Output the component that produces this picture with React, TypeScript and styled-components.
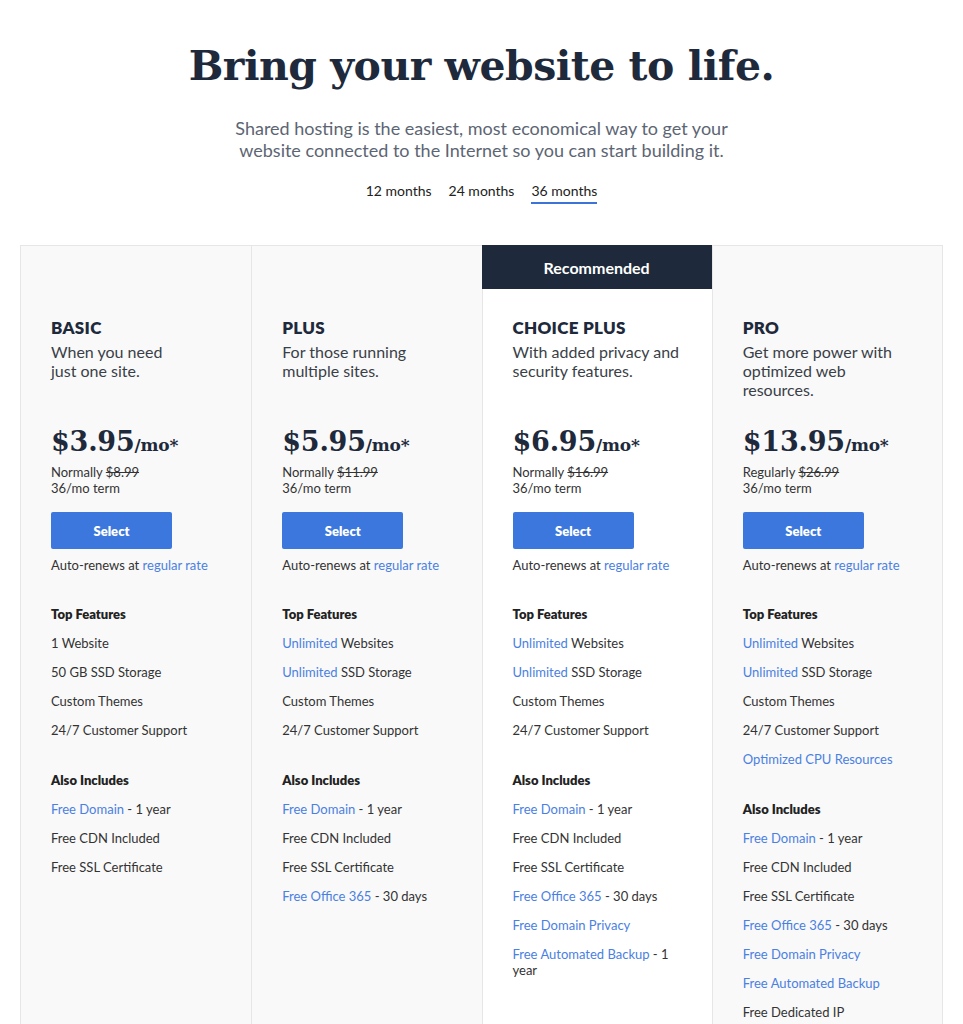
import React from "react";
import styled, { createGlobalStyle } from "styled-components";

const Global = createGlobalStyle`
  html, body { margin: 0; padding: 0; background: #ffffff; }
  body { font-family: Lato, "Open Sans", sans-serif; color: #333; }
  * { box-sizing: border-box; }
`;

const Page = styled.div`
  width: 963px;
  padding-top: 37px;
  display: flex;
  flex-direction: column;
  align-items: center;
`;

const Title = styled.h1`
  margin: 0;
  font-family: "DejaVu Serif", "Liberation Serif", serif;
  font-weight: 700;
  font-size: 41px;
  line-height: 58px;
  color: #1e2a3b;
  letter-spacing: -0.5px;
`;

const Subtitle = styled.p`
  margin: 22px 0 0;
  font-size: 18px;
  line-height: 22px;
  color: #5c6573;
  text-align: center;
`;

const Tabs = styled.div`
  margin-top: 21px;
  display: flex;
  gap: 17px;
`;

const Tab = styled.div<{ $active?: boolean }>`
  font-size: 14px;
  line-height: 18px;
  color: #222;
  padding-bottom: 2px;
  border-bottom: 2px solid ${(p) => (p.$active ? "#3b74d6" : "transparent")};
`;

const Grid = styled.div`
  margin-top: 41px;
  width: 923px;
  display: grid;
  grid-template-columns: repeat(4, 1fr);
  border: 1px solid #e6e6e6;
  border-bottom: none;
`;

const Card = styled.div<{ $featured?: boolean }>`
  background: ${(p) => (p.$featured ? "#ffffff" : "#f9f9f9")};
  border-left: 1px solid #e6e6e6;
  &:first-child { border-left: none; }
  display: flex;
  flex-direction: column;
  padding-bottom: 60px;
`;

const Banner = styled.div<{ $show?: boolean }>`
  height: 44px;
  margin: -1px 0 0 -1px;
  background: ${(p) => (p.$show ? "#1e2a3b" : "transparent")};
  color: #fff;
  font-size: 16px;
  font-weight: 700;
  display: flex;
  align-items: center;
  justify-content: center;
`;

const Body = styled.div`
  padding: 29px 31px 0 30px;
  display: flex;
  flex-direction: column;
`;

const PlanName = styled.div`
  font-size: 17px;
  font-weight: 800;
  line-height: 20px;
  letter-spacing: 0.3px;
  color: #1e2a3b;
  text-transform: uppercase;
`;

const Desc = styled.div`
  margin-top: 4px;
  font-size: 16px;
  line-height: 19px;
  color: #3a3f48;
  min-height: 57px;
  white-space: pre-line;
`;

const Price = styled.div`
  margin-top: 25px;
  font-family: "DejaVu Serif", "Liberation Serif", serif;
  font-weight: 700;
  color: #1e2a3b;
  font-size: 27px;
  line-height: 36px;
  letter-spacing: -0.2px;
`;

const Per = styled.span`
  font-size: 17px;
`;

const Small = styled.div`
  font-size: 13px;
  line-height: 16px;
  color: #333;
`;

const PriceNote = styled.div`
  margin-top: 1px;
`;

const Strike = styled.span`
  text-decoration: line-through;
`;

const Button = styled.button`
  margin-top: 16px;
  width: 121px;
  height: 37px;
  border: none;
  border-radius: 2px;
  background: #3c77dd;
  color: #fff;
  font-family: Lato, sans-serif;
  font-size: 13px;
  font-weight: 800;
  cursor: pointer;
`;

const Renew = styled(Small)`
  margin-top: 8px;
`;

const Link = styled.span`
  color: #4a80e2;
`;

const Section = styled.div<{ $gap: number }>`
  margin-top: ${(p) => p.$gap}px;
  display: flex;
  flex-direction: column;
  gap: 13px;
`;

const SectionTitle = styled.div`
  font-size: 13px;
  font-weight: 800;
  line-height: 16px;
  color: #222;
`;

const Item = styled.div`
  font-size: 13px;
  line-height: 16px;
  color: #333;
`;

type Feature = { link?: string; rest?: string };

type Plan = {
  name: string;
  desc: string;
  price: string;
  label: string;
  was: string;
  featured?: boolean;
  top: Feature[];
  also: Feature[];
};

const plans: Plan[] = [
  {
    name: "Basic",
    desc: "When you need\njust one site.",
    price: "$3.95",
    label: "Normally",
    was: "$8.99",
    top: [
      { rest: "1 Website" },
      { rest: "50 GB SSD Storage" },
      { rest: "Custom Themes" },
      { rest: "24/7 Customer Support" },
    ],
    also: [
      { link: "Free Domain", rest: " - 1 year" },
      { rest: "Free CDN Included" },
      { rest: "Free SSL Certificate" },
    ],
  },
  {
    name: "Plus",
    desc: "For those running\nmultiple sites.",
    price: "$5.95",
    label: "Normally",
    was: "$11.99",
    top: [
      { link: "Unlimited", rest: " Websites" },
      { link: "Unlimited", rest: " SSD Storage" },
      { rest: "Custom Themes" },
      { rest: "24/7 Customer Support" },
    ],
    also: [
      { link: "Free Domain", rest: " - 1 year" },
      { rest: "Free CDN Included" },
      { rest: "Free SSL Certificate" },
      { link: "Free Office 365", rest: " - 30 days" },
    ],
  },
  {
    name: "Choice Plus",
    desc: "With added privacy and\nsecurity features.",
    price: "$6.95",
    label: "Normally",
    was: "$16.99",
    featured: true,
    top: [
      { link: "Unlimited", rest: " Websites" },
      { link: "Unlimited", rest: " SSD Storage" },
      { rest: "Custom Themes" },
      { rest: "24/7 Customer Support" },
    ],
    also: [
      { link: "Free Domain", rest: " - 1 year" },
      { rest: "Free CDN Included" },
      { rest: "Free SSL Certificate" },
      { link: "Free Office 365", rest: " - 30 days" },
      { link: "Free Domain Privacy" },
      { link: "Free Automated Backup", rest: " - 1 year" },
    ],
  },
  {
    name: "Pro",
    desc: "Get more power with\noptimized web\nresources.",
    price: "$13.95",
    label: "Regularly",
    was: "$26.99",
    top: [
      { link: "Unlimited", rest: " Websites" },
      { link: "Unlimited", rest: " SSD Storage" },
      { rest: "Custom Themes" },
      { rest: "24/7 Customer Support" },
      { link: "Optimized CPU Resources" },
    ],
    also: [
      { link: "Free Domain", rest: " - 1 year" },
      { rest: "Free CDN Included" },
      { rest: "Free SSL Certificate" },
      { link: "Free Office 365", rest: " - 30 days" },
      { link: "Free Domain Privacy" },
      { link: "Free Automated Backup" },
      { rest: "Free Dedicated IP" },
    ],
  },
];

const FeatureRow = ({ f }: { f: Feature }) => (
  <Item>
    {f.link && <Link>{f.link}</Link>}
    {f.rest}
  </Item>
);

export default function App() {
  return (
    <>
      <Global />
      <Page>
        <Title>Bring your website to life.</Title>
        <Subtitle>
          Shared hosting is the easiest, most economical way to get your
          <br />
          website connected to the Internet so you can start building it.
        </Subtitle>
        <Tabs>
          <Tab>12 months</Tab>
          <Tab>24 months</Tab>
          <Tab $active>36 months</Tab>
        </Tabs>
        <Grid>
          {plans.map((p) => (
            <Card key={p.name} $featured={p.featured}>
              <Banner $show={p.featured}>{p.featured ? "Recommended" : ""}</Banner>
              <Body>
                <PlanName>{p.name}</PlanName>
                <Desc>{p.desc}</Desc>
                <Price>
                  {p.price}
                  <Per>/mo*</Per>
                </Price>
                <PriceNote>
                  <Small>
                    {p.label} <Strike>{p.was}</Strike>
                  </Small>
                  <Small>36/mo term</Small>
                </PriceNote>
                <div>
                  <Button>Select</Button>
                </div>
                <Renew>
                  Auto-renews at <Link>regular rate</Link>
                </Renew>
                <Section $gap={33}>
                  <SectionTitle>Top Features</SectionTitle>
                  {p.top.map((f, i) => (
                    <FeatureRow key={i} f={f} />
                  ))}
                </Section>
                <Section $gap={34}>
                  <SectionTitle>Also Includes</SectionTitle>
                  {p.also.map((f, i) => (
                    <FeatureRow key={i} f={f} />
                  ))}
                </Section>
              </Body>
            </Card>
          ))}
        </Grid>
      </Page>
    </>
  );
}
